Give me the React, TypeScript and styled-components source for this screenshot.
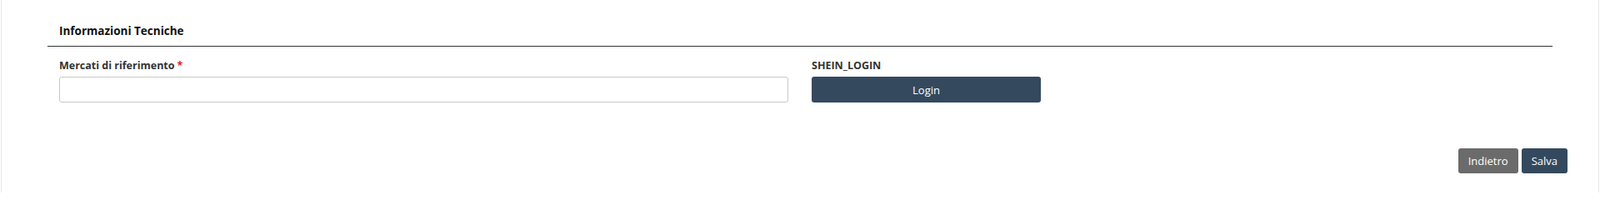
import React from 'react';
import styled, { createGlobalStyle } from 'styled-components';

const GlobalStyle = createGlobalStyle`
  html, body {
    margin: 0;
    padding: 0;
    background: #ffffff;
    font-family: 'Open Sans', 'Liberation Sans', sans-serif;
  }
`;

const Card = styled.div`
  box-sizing: border-box;
  height: 231px;
  margin: 0 1px;
  border-left: 1px solid #e8e8e8;
  border-right: 1px solid #e8e8e8;
  background: #ffffff;
`;

const Section = styled.section`
  margin: 0 55px;
`;

const SectionTitle = styled.h3`
  margin: 0;
  padding: 28px 14px 9px;
  font-size: 13.5px;
  line-height: 18px;
  font-weight: 700;
  color: #111111;
  border-bottom: 1px solid #333333;
`;

const FieldRow = styled.div`
  display: grid;
  grid-template-columns: 1fr 1fr;
`;

const Field = styled.div`
  display: flex;
  flex-direction: column;
  align-items: flex-start;
  padding: 14px 14px 0;
`;

const Label = styled.label`
  margin-bottom: 5px;
  font-size: 12.5px;
  line-height: 17px;
  font-weight: 700;
  color: #333333;
`;

const Required = styled.span`
  margin-left: 3px;
  color: #e41b17;
`;

const TextInput = styled.input`
  box-sizing: border-box;
  width: 100%;
  height: 31px;
  padding: 4px 8px;
  border: 1px solid #c8c8c8;
  border-radius: 3px;
  font-family: inherit;
  font-size: 12px;
  outline: none;
`;

const Button = styled.button<{ $variant?: 'primary' | 'secondary'; $width?: number }>`
  box-sizing: border-box;
  height: ${({ $width }) => ($width ? '31px' : '30px')};
  width: ${({ $width }) => ($width ? `${$width}px` : 'auto')};
  padding: 0 12px;
  border: none;
  border-radius: 3px;
  background: ${({ $variant }) => ($variant === 'secondary' ? '#6b6b6b' : '#34495e')};
  color: #ffffff;
  font-family: inherit;
  font-size: 13px;
  line-height: 30px;
  cursor: pointer;
`;

const Footer = styled.div`
  display: flex;
  justify-content: flex-end;
  gap: 4px;
  margin-top: 55px;
  padding-right: 37px;
`;

const App = () => {
  return (
    <>
      <GlobalStyle />
      <Card>
        <Section>
          <SectionTitle>Informazioni Tecniche</SectionTitle>
          <FieldRow>
            <Field>
              <Label>
                Mercati di riferimento<Required>*</Required>
              </Label>
              <TextInput type="text" />
            </Field>
            <Field>
              <Label>SHEIN_LOGIN</Label>
              <Button $variant="primary" $width={275}>
                Login
              </Button>
            </Field>
          </FieldRow>
        </Section>
        <Footer>
          <Button $variant="secondary">Indietro</Button>
          <Button $variant="primary">Salva</Button>
        </Footer>
      </Card>
    </>
  );
};

export default App;
